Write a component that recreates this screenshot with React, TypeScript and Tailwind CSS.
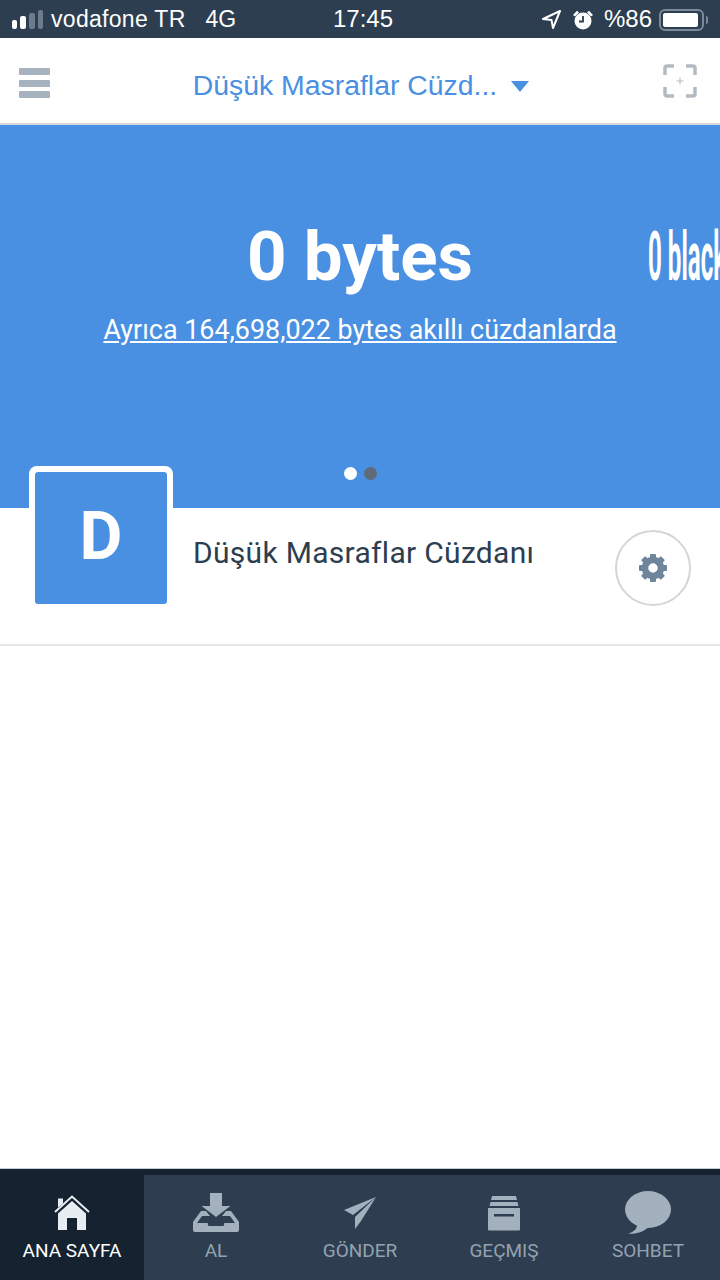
import { ReactNode } from "react";

const teeth = [0, 45, 90, 135, 180, 225, 270, 315];

const StatusBar = () => (
  <div className="h-[38px] bg-[#2c3e50] flex items-center text-white font-['Liberation_Sans',sans-serif] text-[24px] shrink-0 relative">
    <div className="flex items-end gap-[3px] ml-3 h-[19px] w-[31px]">
      <div className="w-[5px] h-[9px] bg-white rounded-[2px]" />
      <div className="w-[6px] h-[13px] bg-white rounded-[2px]" />
      <div className="w-[6px] h-[16px] bg-[#6d7b8a] rounded-[2px]" />
      <div className="w-[5px] h-[19px] bg-[#6d7b8a] rounded-[2px]" />
    </div>
    <span className="ml-2 text-[23px] tracking-[0.3px]">vodafone TR</span>
    <span className="ml-5 text-[23px]">4G</span>
    <span className="absolute left-[333px] font-medium">17:45</span>
    <svg className="absolute left-[541px] top-[9px]" width="21" height="21" viewBox="0 0 21 21" fill="none" stroke="white" strokeWidth="2" strokeLinejoin="round">
      <path d="M19 2 L2 10 L10.5 11 L12 19 Z" />
    </svg>
    <svg className="absolute left-[572px] top-[9px]" width="22" height="22" viewBox="0 0 22 22">
      <circle cx="11" cy="12" r="8.5" fill="white" />
      <path d="M11 7v5.5H7" fill="none" stroke="#2c3e50" strokeWidth="1.8" />
      <path d="M1 6 L5 1.8 L7 3.5 L3 7.5Z M21 6 L17 1.8 L15 3.5 L19 7.5Z" fill="white" />
    </svg>
    <span className="absolute left-[604px]">%86</span>
    <div className="absolute left-[659px] top-[9px] w-[45px] h-[22px] border-2 border-[#7d8997] rounded-[6px] p-[2px]">
      <div className="w-[35px] h-full bg-white rounded-[2px]" />
    </div>
    <div className="absolute left-[706px] top-[16px] w-[2px] h-[8px] bg-[#7d8997] rounded-r-[2px]" />
  </div>
);

const Header = () => (
  <div className="h-[87px] bg-white border-b-2 border-[#d3d8dd] flex items-center justify-between pl-[19px] pr-[23px] shrink-0">
    <div className="flex flex-col gap-[4.500px] mt-[5px]">
      <div className="w-[31px] h-[7px] bg-[#a7b2bf] rounded-[1px]" />
      <div className="w-[31px] h-[7px] bg-[#a7b2bf] rounded-[1px]" />
      <div className="w-[31px] h-[7px] bg-[#a7b2bf] rounded-[1px]" />
    </div>
    <div className="flex items-center gap-[14px] ml-[9px] mt-[9px] text-[#4a90e2] font-['Liberation_Sans',sans-serif] text-[28.400px]">
      <span>Düşük Masraflar Cüzd...</span>
      <svg width="18" height="11" viewBox="0 0 18 11" className="mt-[3px]">
        <path d="M0 0h18L9 11z" fill="#4a90e2" />
      </svg>
    </div>
    <svg width="34" height="34" viewBox="0 0 34 34" fill="none" stroke="#b2bac4" strokeWidth="3.500">
      <path d="M2 11V4a2 2 0 0 1 2-2h7M23 2h7a2 2 0 0 1 2 2v7M32 23v7a2 2 0 0 1-2 2h-7M11 32H4a2 2 0 0 1-2-2v-7" />
      <path d="M17 13.500v7M13.500 17h7" strokeWidth="1" />
    </svg>
  </div>
);

const Hero = () => (
  <div className="h-[383px] bg-[#4a90e2] text-white font-['Roboto',sans-serif] relative overflow-hidden shrink-0">
    <div className="flex flex-col items-center pt-[90px]">
      <div className="text-[69px] leading-[84px] font-bold">0 bytes</div>
      <div className="text-[26.900px] leading-[34px] underline mt-[14px]">Ayrıca 164,698,022 bytes akıllı cüzdanlarda</div>
    </div>
    <div className="absolute left-[648px] top-[90px] text-[69px] leading-[84px] font-bold whitespace-nowrap origin-left scale-x-[0.35]">
      0 blackbytes
    </div>
    <div className="absolute left-[344px] top-[342px] flex gap-[7px]">
      <div className="w-[13px] h-[13px] rounded-full bg-white" />
      <div className="w-[13px] h-[13px] rounded-full bg-[#5f6b78]" />
    </div>
  </div>
);

const WalletRow = () => (
  <div className="h-[138px] bg-white border-b-2 border-[#e4e6e8] flex items-start shrink-0 pl-[29px] pr-[29px]">
    <div className="-mt-[42px] w-[144px] h-[144px] bg-white rounded-[8px] p-[6px] relative">
      <div className="w-[132px] h-[132px] bg-[#4a90e2] rounded-[3px] flex items-center justify-center text-white font-['Roboto',sans-serif] font-bold text-[66px] leading-none pb-[2px]">
        D
      </div>
    </div>
    <div className="ml-[20px] mt-[26px] text-[30px] leading-[38px] tracking-[0.3px] text-[#2c3e50] font-['Roboto',sans-serif] flex-1">
      Düşük Masraflar Cüzdanı
    </div>
    <div className="mt-[22px] w-[76px] h-[76px] rounded-full border-2 border-[#d3d6d9] flex items-center justify-center">
      <svg width="30" height="30" viewBox="0 0 30 30">
        {teeth.map((a) => (
          <rect key={a} x="12" y="1" width="6" height="7" rx="1" fill="#6f859c" transform={`rotate(${a} 15 15)`} />
        ))}
        <circle cx="15" cy="15" r="8" fill="none" stroke="#6f859c" strokeWidth="6.500" />
      </svg>
    </div>
  </div>
);

const Tab = ({ label, active, icon }: { label: string; active?: boolean; icon: ReactNode }) => (
  <div className={`flex-1 flex flex-col items-center pt-[16px] ${active ? "bg-[#15222f] text-white" : "bg-[#2e3e50] text-[#94a2b1]"}`}>
    <div className="h-[44px] flex items-center justify-center">{icon}</div>
    <div className="text-[19px] leading-[24px] mt-[4px] font-['Roboto',sans-serif]">{label}</div>
  </div>
);

const TabBar = () => (
  <div className="h-[111px] shrink-0 border-t-[6px] border-[#15222f] flex relative">
    <Tab
      label="ANA SAYFA"
      active
      icon={
        <svg width="36" height="36" viewBox="0 0 36 36">
          <path d="M4 3.500h5v5l-5 4z" fill="#e8edf2" />
          <path d="M1 17 L18 1.500 L35 17" fill="none" stroke="#e8edf2" strokeWidth="2" />
          <path d="M18 6 L32 18.500V35H23V23H13V35H4V18.500Z" fill="#e8edf2" />
        </svg>
      }
    />
    <Tab
      label="AL"
      icon={
        <svg width="46" height="40" viewBox="0 0 46 40" fill="#a3b0bd">
          <path d="M17 0h12v13h8.500L23 24 8.500 13H17z" />
          <path d="M8 18h5l4 5H9l-5 7h11a2 2 0 0 0 2 3h12a2 2 0 0 0 2-3h11l-5-7h-8l4-5h5l8 11v8a2 2 0 0 1-2 2H2a2 2 0 0 1-2-2v-8z" />
        </svg>
      }
    />
    <Tab
      label="GÖNDER"
      icon={
        <svg width="32" height="32" viewBox="0 0 32 32" fill="#a3b0bd">
          <path d="M32 0 L0 13 L9 18 Z" />
          <path d="M32 0 L11 20 L11 32 L17 24 Z" />
        </svg>
      }
    />
    <Tab
      label="GEÇMIŞ"
      icon={
        <svg width="32" height="36" viewBox="0 0 32 36" fill="#a3b0bd">
          <path d="M4 1h24l1 4H3z" />
          <path d="M2.500 7h27l1 4h-29z" />
          <path d="M0 13h32v21.500a1 1 0 0 1-1 1H1a1 1 0 0 1-1-1z" />
          <rect x="6" y="19" width="20" height="2.500" fill="#2e3e50" />
        </svg>
      }
    />
    <Tab
      label="SOHBET"
      icon={
        <svg width="46" height="44" viewBox="0 0 46 44" fill="#a3b0bd">
          <ellipse cx="23" cy="18.500" rx="23" ry="18.500" />
          <path d="M12 30 C13 36 11 40 3 43 C13 43 20 40 25 35Z" />
        </svg>
      }
    />
  </div>
);

const App = () => (
  <div className="w-[720px] h-[1280px] flex flex-col bg-white overflow-hidden">
    <StatusBar />
    <Header />
    <Hero />
    <WalletRow />
    <div className="flex-1 bg-white border-b border-[#c5ced6]" />
    <TabBar />
  </div>
);

export default App;
